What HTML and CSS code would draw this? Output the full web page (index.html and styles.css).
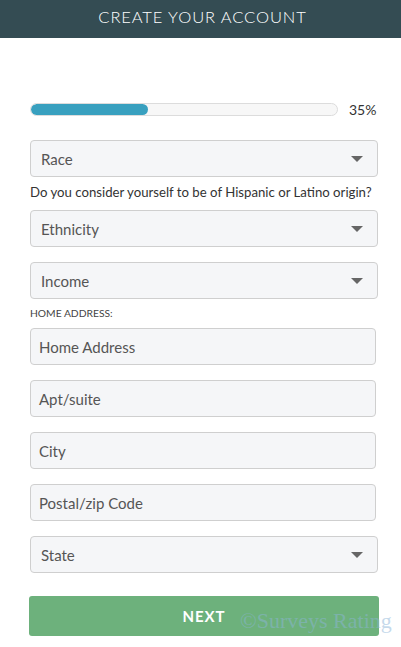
FILE: index.html
```html
<!DOCTYPE html>
<html>
<head>
<meta charset="utf-8">
<link rel="stylesheet" href="styles.css">
</head>
<body>
<header class="topbar"><h1 class="title">CREATE YOUR ACCOUNT</h1></header>
<main class="form">
  <div class="progress-row">
    <div class="track"><div class="fill" style="width:38.3%"></div></div>
    <span class="pct">35%</span>
  </div>
  <div class="select first"><span>Race</span><i class="caret"></i></div>
  <p class="question">Do you consider yourself to be of Hispanic or Latino origin?</p>
  <div class="select"><span>Ethnicity</span><i class="caret"></i></div>
  <div class="select gap"><span>Income</span><i class="caret"></i></div>
  <p class="section">HOME ADDRESS:</p>
  <div class="input">Home Address</div>
  <div class="input gap">Apt/suite</div>
  <div class="input gap">City</div>
  <div class="input gap">Postal/zip Code</div>
  <div class="select gap"><span>State</span><i class="caret"></i></div>
  <div class="btn-wrap">
    <button class="next">NEXT</button>
    <span class="watermark">©Surveys Rating</span>
  </div>
</main>
</body>
</html>
```
FILE: styles.css
```css
* { box-sizing: border-box; }
html, body { margin: 0; padding: 0; background: #fff; }
body { font-family: "Lato", "Open Sans", sans-serif; color: #333; width: 401px; height: 647px; overflow: hidden; }
.topbar { height: 38px; background: #344c53; display: flex; align-items: center; justify-content: center; }
.title { margin: 0 0 4px 4px; font-family: "Lato", sans-serif; font-weight: 300; font-size: 16.5px; letter-spacing: 0.9px; color: #fff; line-height: 1; }
.form { padding: 64px 23px 0 30px; display: flex; flex-direction: column; }
.progress-row { display: flex; align-items: center; height: 14px; }
.track { width: 308px; height: 13px; border: 1px solid #dcdcdc; border-radius: 7px; background: #f7f7f7; overflow: hidden; }
.fill { height: 100%; background: #38a0bf; border-radius: 7px; }
.pct { margin-left: 11px; font-size: 14px; color: #333; }
.select, .input { height: 37px; border: 1px solid #cfcfcf; border-radius: 4px; background: #f5f6f8; display: flex; align-items: center; font-size: 15px; color: #555; }
.select { padding: 0 14px 0 10px; justify-content: space-between; }
.select.first { margin-top: 24px; }
.select.gap, .input.gap { margin-top: 15px; }
.input { width: 346px; padding: 0 8px; }
.caret { width: 0; height: 0; border-left: 6px solid transparent; border-right: 6px solid transparent; border-top: 6px solid #666; }
.question { margin: 7px 0 10px; font-size: 13.2px; color: #333; line-height: 16px; white-space: nowrap; }
.section { margin: 7px 0 8px; font-size: 10.3px; color: #444; line-height: 14px; }
.btn-wrap { position: relative; margin-top: 23px; }
.next { width: 350px; margin-left: -1px; height: 40px; border: 0; border-radius: 3px; background: #6db17c; color: #fff; font-family: "Lato", sans-serif; font-weight: 700; font-size: 15px; letter-spacing: 1px; padding: 0; }
.watermark { position: absolute; left: 210px; top: 12px; font-family: "Liberation Serif", serif; font-size: 22px; color: rgba(140, 180, 215, 0.5); white-space: nowrap; }
```
